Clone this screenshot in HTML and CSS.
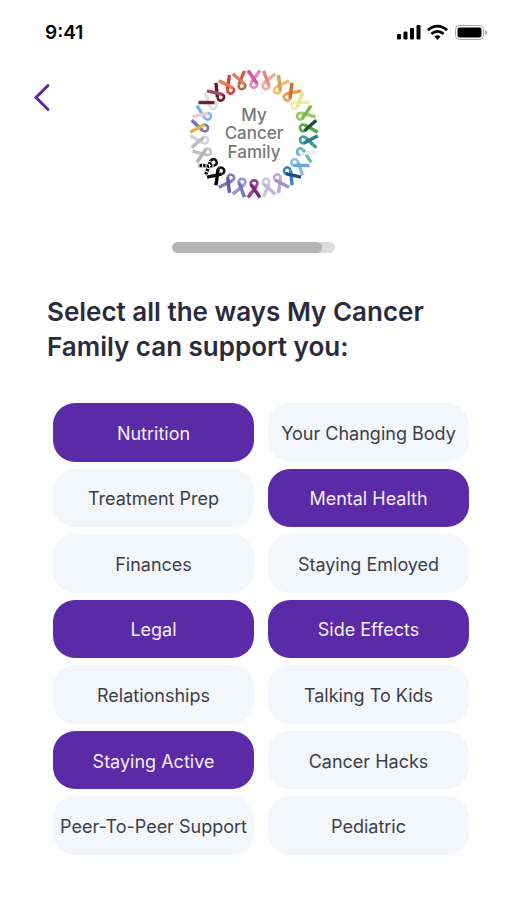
FILE: index.html
```html
<!DOCTYPE html>
<html lang="en">
<head>
  <meta charset="UTF-8">
  <meta name="viewport" content="width=device-width, initial-scale=1">
  <title>My Cancer Family</title>
  <link rel="stylesheet" href="styles.css">
</head>
<body>
  <div class="status-bar">
    <span class="time">9:41</span>
    <svg class="status-icons" width="90" height="18" viewBox="0 0 90 18" aria-hidden="true">
      <!-- signal -->
      <rect x="0" y="11" width="4" height="5.500" rx="1.3"/>
      <rect x="6.5" y="8.5" width="4" height="8" rx="1.3"/>
      <rect x="13" y="5" width="4" height="11.500" rx="1.3"/>
      <rect x="19.5" y="2" width="4" height="14.500" rx="1.3"/>
      <!-- wifi -->
      <g fill="none" stroke="#000" stroke-width="2.8">
        <path d="M31 7.2C36.500 1.700 44.500 1.700 50 7.200"/>
        <path d="M34.400 11C38 7.400 43 7.400 46.600 11"/>
      </g>
      <path d="M37.400 13.600Q40.500 11 43.600 13.600L40.500 16.900Z"/>
      <!-- battery -->
      <rect x="58.500" y="2.500" width="28" height="14" rx="4" fill="none" stroke="#a6a6a6"/>
      <rect x="60.500" y="4.500" width="24" height="10" rx="2"/>
      <path d="M88 7v5q2-.800 2-2.500t-2-2.500z" fill="#a6a6a6"/>
    </svg>
  </div>

  <header class="header">
    <button class="back" type="button" aria-label="Back">
      <svg width="18" height="30" viewBox="0 0 18 30">
        <path d="M15 3.500L3 15.500L15 27.500" fill="none" stroke="#5b2aa6" stroke-width="3" stroke-linecap="round"/>
      </svg>
    </button>
    <svg class="logo" width="132" height="132" viewBox="-66 -66 132 132" role="img" aria-label="My Cancer Family">
      <defs>
        <g id="ribbon" fill="none" stroke-width="3.4">
          <path d="M6-63.500L-2.800-51.500" stroke="currentColor"/>
          <path d="M-2.800-51.500C-6-45 5-44.500 3-51" stroke="currentColor" stroke-width="2.600"/>
          <path d="M-6-63.500L3-50.500"/>
        </g>
      </defs>
      <use href="#ribbon" stroke="#d9529b" color="#e58abb"/>
      <use href="#ribbon" transform="rotate(14)" stroke="#e58a80" color="#efaaa0"/>
      <use href="#ribbon" transform="rotate(28)" stroke="#d9a04e" color="#efbe68"/>
      <use href="#ribbon" transform="rotate(42)" stroke="#c9702c" color="#ef9a42"/>
      <use href="#ribbon" transform="rotate(55)" stroke="#e9e58a" color="#f2eda0"/>
      <use href="#ribbon" transform="rotate(69)" stroke="#7cb94e" color="#96cb62"/>
      <use href="#ribbon" transform="rotate(83)" stroke="#17542c" color="#54a83a"/>
      <use href="#ribbon" transform="rotate(97)" stroke="#2c7f88" color="#3a9f98"/>
      <use href="#ribbon" transform="rotate(111)" stroke="#e6eaed" color="#62bcb4"/>
      <use href="#ribbon" transform="rotate(125)" stroke="#6aa8da" color="#8abce8"/>
      <use href="#ribbon" transform="rotate(138)" stroke="#1e4e86" color="#3c82c2"/>
      <use href="#ribbon" transform="rotate(152)" stroke="#a093cb" color="#b8abd9"/>
      <use href="#ribbon" transform="rotate(166)" stroke="#bcb3d6" color="#cbc7da"/>
      <use href="#ribbon" transform="rotate(180)" stroke="#7d2585" color="#9b3b9e"/>
      <use href="#ribbon" transform="rotate(194)" stroke="#7673b6" color="#9995cf"/>
      <use href="#ribbon" transform="rotate(208)" stroke="#6558a0" color="#8278ba"/>
      <use href="#ribbon" transform="rotate(222)" stroke="#000" color="#111"/>
      <!-- striped ribbon -->
      <g transform="rotate(235)">
        <use href="#ribbon" stroke="#111" color="#111"/>
        <path d="M6-63.500L-2.800-51.500M-6-63.500L3-50.500" fill="none" stroke="#fff" stroke-width="3.6" stroke-dasharray="1 2.5"/>
      </g>
      <use href="#ribbon" transform="rotate(249)" stroke="#b4b4b4" color="#c4c4c4"/>
      <use href="#ribbon" transform="rotate(263)" stroke="#b9bdc2" color="#d0d3d8"/>
      <use href="#ribbon" transform="rotate(277)" stroke="#dfb83c" color="#7b70b8"/>
      <use href="#ribbon" transform="rotate(291)" stroke="#f3c6cf" color="#74b9e6"/>
      <use href="#ribbon" transform="rotate(305)" stroke="#6c2336" color="#e0e0da"/>
      <use href="#ribbon" transform="rotate(318)" stroke="#93506c" color="#6b1721"/>
      <use href="#ribbon" transform="rotate(332)" stroke="#ed7a48" color="#d8402f"/>
      <use href="#ribbon" transform="rotate(346)" stroke="#d5805c" color="#b9683f"/>
      <g class="logo-text">
        <text y="-13">My</text>
        <text y="5">Cancer</text>
        <text y="24">Family</text>
      </g>
    </svg>
  </header>

  <progress class="progress" value="92" max="100" aria-label="Progress"></progress>

  <main>
    <h1>Select all the ways My Cancer Family can support you:</h1>

    <div class="options">
      <button type="button" aria-pressed="true">Nutrition</button>
      <button type="button" aria-pressed="false">Your Changing Body</button>
      <button type="button" aria-pressed="false">Treatment Prep</button>
      <button type="button" aria-pressed="true">Mental Health</button>
      <button type="button" aria-pressed="false">Finances</button>
      <button type="button" aria-pressed="false">Staying Emloyed</button>
      <button type="button" aria-pressed="true">Legal</button>
      <button type="button" aria-pressed="true">Side Effects</button>
      <button type="button" aria-pressed="false">Relationships</button>
      <button type="button" aria-pressed="false">Talking To Kids</button>
      <button type="button" aria-pressed="true">Staying Active</button>
      <button type="button" aria-pressed="false">Cancer Hacks</button>
      <button type="button" aria-pressed="false">Peer-To-Peer Support</button>
      <button type="button" aria-pressed="false">Pediatric</button>
    </div>
  </main>

  <script>
    document.querySelectorAll(".options button").forEach((button) => {
      button.addEventListener("click", () => {
        const pressed = button.getAttribute("aria-pressed") === "true";
        button.setAttribute("aria-pressed", String(!pressed));
      });
    });
  </script>
</body>
</html>
```
FILE: styles.css
```css
:root {
  --primary-color: #5b2aa6;
  --option-color: #f3f6fa;
  --text-color: #2b2b3d;
}

* {
  box-sizing: border-box;
  margin: 0;
  padding: 0;
}

body {
  font-family: Inter, "Liberation Sans", sans-serif;
  background-color: #fff;
  color: var(--text-color);
}

.status-bar {
  display: flex;
  align-items: center;
  justify-content: space-between;
  padding: 20px 20px 0 45px;
  height: 44px;
}

.time {
  font-size: 19px;
  font-weight: 600;
  color: #000;
}

.header {
  display: grid;
  grid-template-columns: 1fr auto 1fr;
  align-items: start;
  padding: 24px 33px 0;
}

.back {
  justify-self: start;
  margin-top: 14px;
  border: none;
  background: none;
  cursor: pointer;
}

.back svg,
.logo {
  display: block;
}

.logo-text {
  font-size: 17px;
  font-weight: 500;
  fill: #777;
  text-anchor: middle;
}

.progress {
  display: block;
  width: 32%;
  height: 11px;
  margin: 42px auto 0;
  appearance: none;
  border: none;
  border-radius: 6px;
  background-color: #dcdcdc;
  overflow: hidden;
}

.progress::-webkit-progress-bar {
  background-color: #dcdcdc;
}

.progress::-webkit-progress-value {
  background-color: #b5b5b5;
  border-radius: 6px;
}

main {
  padding: 41px 38px 45px 47px;
}

h1 {
  font-size: 26px;
  font-weight: 600;
  line-height: 35px;
}

.options {
  display: grid;
  grid-template-columns: 1fr 1fr;
  grid-auto-rows: 1fr;
  gap: 7px 14px;
  min-height: 452px;
  margin: 39px 0 0 6px;
}

.options button {
  padding-top: 2px;
  border: none;
  border-radius: 22px;
  background-color: var(--option-color);
  color: #3c3f4a;
  font-family: inherit;
  font-size: 18px;
  white-space: nowrap;
  cursor: pointer;
}

.options button[aria-pressed="true"] {
  background-color: var(--primary-color);
  color: #f4effb;
}
```
